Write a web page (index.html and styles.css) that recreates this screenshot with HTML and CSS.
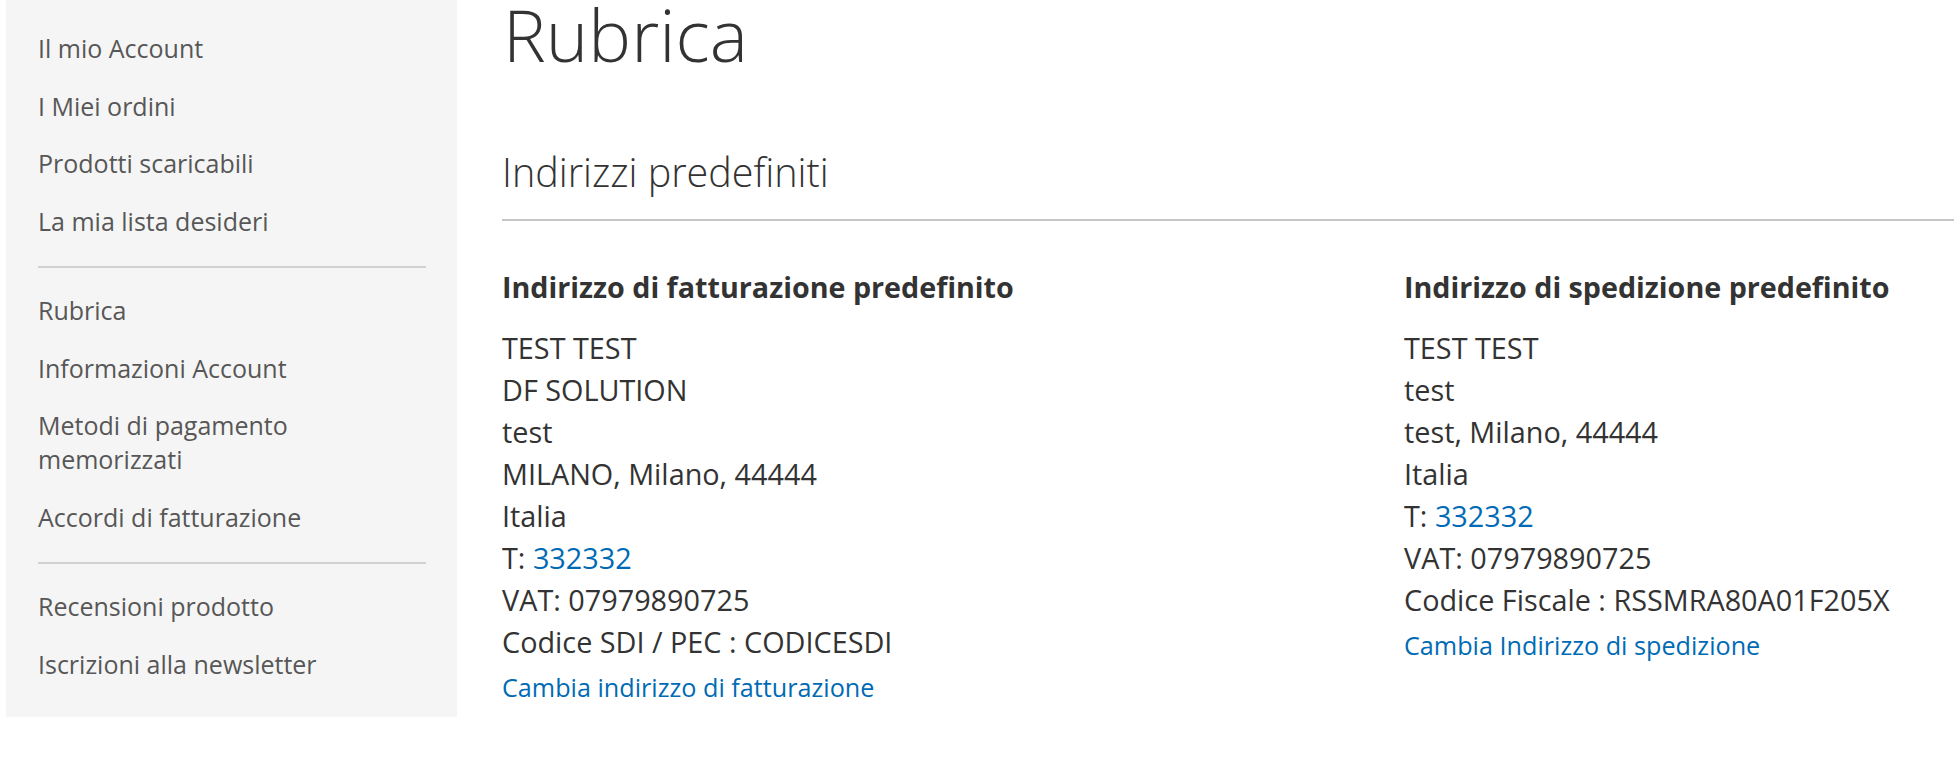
FILE: index.html
```html
<!DOCTYPE html>
<html lang="it">
<head>
<meta charset="utf-8">
<title>Rubrica</title>
<link rel="stylesheet" href="styles.css">
</head>
<body>
<div class="page">

  <div class="sidebar">
    <ul class="nav">
      <li><a href="#">Il mio Account</a></li>
      <li><a href="#">I Miei ordini</a></li>
      <li><a href="#">Prodotti scaricabili</a></li>
      <li><a href="#">La mia lista desideri</a></li>
      <li class="delim"></li>
      <li><a href="#">Rubrica</a></li>
      <li><a href="#">Informazioni Account</a></li>
      <li><a href="#">Metodi di pagamento<br>memorizzati</a></li>
      <li><a href="#">Accordi di fatturazione</a></li>
      <li class="delim"></li>
      <li><a href="#">Recensioni prodotto</a></li>
      <li><a href="#">Iscrizioni alla newsletter</a></li>
    </ul>
  </div>

  <div class="main">
    <h1 class="page-title">Rubrica</h1>

    <div class="block-title">Indirizzi predefiniti</div>

    <div class="boxes">
      <div class="box">
        <div class="box-title">Indirizzo di fatturazione predefinito</div>
        <address>
          TEST TEST<br>
          DF SOLUTION<br>
          test<br>
          MILANO, Milano, 44444<br>
          Italia<br>
          T: <a href="#">332332</a><br>
          VAT: 07979890725<br>
          Codice SDI / PEC : CODICESDI
        </address>
        <div class="box-actions"><a href="#">Cambia indirizzo di fatturazione</a></div>
      </div>

      <div class="box">
        <div class="box-title">Indirizzo di spedizione predefinito</div>
        <address>
          TEST TEST<br>
          test<br>
          test, Milano, 44444<br>
          Italia<br>
          T: <a href="#">332332</a><br>
          VAT: 07979890725<br>
          Codice Fiscale : RSSMRA80A01F205X
        </address>
        <div class="box-actions"><a href="#">Cambia Indirizzo di spedizione</a></div>
      </div>
    </div>
  </div>

</div>
</body>
</html>
```

FILE: styles.css
```css
body {
  margin: 0;
  background: #fff;
  color: #333;
  font-family: 'Open Sans', 'Liberation Sans', sans-serif;
}

a { text-decoration: none; }

.page {
  display: flex; align-items: flex-start;
  padding-left: 6px; gap: 45px;
}

/* left account menu */

.sidebar {
  flex: 0 0 451px;
  background: #f5f5f5;
}

.nav {
  list-style: none; margin: 0;
  padding: 19px 0 25px 0;
}

.nav a {
  display: block;
  padding: 12px 0 11.5px 32px;
  font-size: 25px; line-height: 34px;
  color: #575757;
}

.nav .delim {
  height: 2px; background: #d1d1d1;
  margin: 17px 31px 13px 32px;
}

/* content */

.main {
  flex: 1; min-width: 0;
  padding-top: 4px;
}

.page-title {
  margin: 0 0 0 1px;
  font-size: 72px; line-height: 60px;
  font-weight: 300; color: #333;
}

.block-title {
  margin-top: 83px;
  padding-bottom: 22px;
  border-bottom: 2px solid #c6c6c6;
  font-size: 39.5px; line-height: 50px;
  font-weight: 300;
}

.boxes {
  display: grid;
  grid-template-columns: 902px auto;
  margin-top: 45px;
}

.box-title {
  font-size: 28.7px; line-height: 42px;
  font-weight: 700;
  margin-bottom: 19px;
}

address {
  font-style: normal;
  font-size: 28.8px; line-height: 42px;
}

address a { color: #006bb4; }

.box-actions {
  margin-top: 6px;
  font-size: 25.2px; line-height: 36px;
}

.box-actions a { color: #006bb4; }
```
